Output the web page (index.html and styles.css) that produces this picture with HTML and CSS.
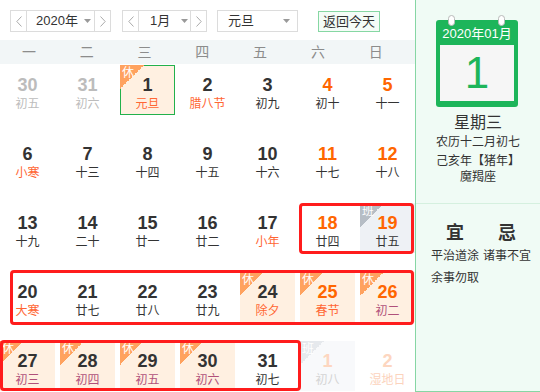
FILE: index.html
```html
<!DOCTYPE html>
<html lang="zh-CN">
<head>
<meta charset="utf-8">
<title>万年历</title>
<link rel="stylesheet" href="styles.css">
</head>
<body>
<div class="wrap">
  <div class="main">
    <div class="toolbar">
      <div class="sel sel-year">
        <span class="arrow arrow-l"><svg width="6" height="11" viewBox="0 0 6 11"><polyline points="5.5,0.5 0.8,5.5 5.5,10.5" fill="none" stroke="#aaa" stroke-width="1"/></svg></span>
        <span class="sel-mid"><span>2020年</span><svg class="caret" width="7" height="4" viewBox="0 0 7 4"><polygon points="0,0 7,0 3.5,4" fill="#999"/></svg></span>
        <span class="arrow arrow-r"><svg width="6" height="11" viewBox="0 0 6 11"><polyline points="0.5,0.5 5.2,5.5 0.5,10.5" fill="none" stroke="#aaa" stroke-width="1"/></svg></span>
      </div>
      <div class="sel sel-month">
        <span class="arrow arrow-l"><svg width="6" height="11" viewBox="0 0 6 11"><polyline points="5.5,0.5 0.8,5.5 5.5,10.5" fill="none" stroke="#aaa" stroke-width="1"/></svg></span>
        <span class="sel-mid"><span>1月</span><svg class="caret" width="7" height="4" viewBox="0 0 7 4"><polygon points="0,0 7,0 3.5,4" fill="#999"/></svg></span>
        <span class="arrow arrow-r"><svg width="6" height="11" viewBox="0 0 6 11"><polyline points="0.5,0.5 5.2,5.5 0.5,10.5" fill="none" stroke="#aaa" stroke-width="1"/></svg></span>
      </div>
      <div class="sel sel-hol">
        <span class="sel-mid"><span>元旦</span><svg class="caret" width="7" height="4" viewBox="0 0 7 4"><polygon points="0,0 7,0 3.5,4" fill="#999"/></svg></span>
      </div>
      <button class="today-btn">返回今天</button>
    </div>
    <div class="weekhead">
      <span>一</span><span>二</span><span>三</span><span>四</span><span>五</span><span>六</span><span>日</span>
    </div>
    <div class="grid">
      <div class="cell other"><div class="num">30</div><div class="lunar">初五</div></div>
      <div class="cell other"><div class="num">31</div><div class="lunar">初六</div></div>
      <div class="cell rest selected"><span class="badge">休</span><div class="num">1</div><div class="lunar fest">元旦</div></div>
      <div class="cell"><div class="num">2</div><div class="lunar fest">腊八节</div></div>
      <div class="cell"><div class="num">3</div><div class="lunar">初九</div></div>
      <div class="cell wkend"><div class="num">4</div><div class="lunar">初十</div></div>
      <div class="cell wkend"><div class="num">5</div><div class="lunar">十一</div></div>

      <div class="cell"><div class="num">6</div><div class="lunar fest">小寒</div></div>
      <div class="cell"><div class="num">7</div><div class="lunar">十三</div></div>
      <div class="cell"><div class="num">8</div><div class="lunar">十四</div></div>
      <div class="cell"><div class="num">9</div><div class="lunar">十五</div></div>
      <div class="cell"><div class="num">10</div><div class="lunar">十六</div></div>
      <div class="cell wkend"><div class="num">11</div><div class="lunar">十七</div></div>
      <div class="cell wkend"><div class="num">12</div><div class="lunar">十八</div></div>

      <div class="cell"><div class="num">13</div><div class="lunar">十九</div></div>
      <div class="cell"><div class="num">14</div><div class="lunar">二十</div></div>
      <div class="cell"><div class="num">15</div><div class="lunar">廿一</div></div>
      <div class="cell"><div class="num">16</div><div class="lunar">廿二</div></div>
      <div class="cell"><div class="num">17</div><div class="lunar fest">小年</div></div>
      <div class="cell wkend"><div class="num">18</div><div class="lunar">廿四</div></div>
      <div class="cell wkend work"><span class="badge">班</span><div class="num">19</div><div class="lunar">廿五</div></div>

      <div class="cell"><div class="num">20</div><div class="lunar fest">大寒</div></div>
      <div class="cell"><div class="num">21</div><div class="lunar">廿七</div></div>
      <div class="cell"><div class="num">22</div><div class="lunar">廿八</div></div>
      <div class="cell"><div class="num">23</div><div class="lunar">廿九</div></div>
      <div class="cell rest"><span class="badge">休</span><div class="num">24</div><div class="lunar fest">除夕</div></div>
      <div class="cell rest wkend"><span class="badge">休</span><div class="num">25</div><div class="lunar fest">春节</div></div>
      <div class="cell rest wkend"><span class="badge">休</span><div class="num">26</div><div class="lunar">初二</div></div>

      <div class="cell rest"><span class="badge">休</span><div class="num">27</div><div class="lunar">初三</div></div>
      <div class="cell rest"><span class="badge">休</span><div class="num">28</div><div class="lunar">初四</div></div>
      <div class="cell rest"><span class="badge">休</span><div class="num">29</div><div class="lunar">初五</div></div>
      <div class="cell rest"><span class="badge">休</span><div class="num">30</div><div class="lunar">初六</div></div>
      <div class="cell"><div class="num">31</div><div class="lunar">初七</div></div>
      <div class="cell next work"><span class="badge">班</span><div class="num">1</div><div class="lunar">初八</div></div>
      <div class="cell next"><div class="num">2</div><div class="lunar fest">湿地日</div></div>
    </div>
    <div class="mark mark-a"></div>
    <div class="mark mark-b"></div>
    <div class="mark mark-c"></div>
  </div>
  <aside class="side">
    <div class="calicon">
      <span class="ring ring-l"></span>
      <span class="ring ring-r"></span>
      <div class="cal-head">2020年01月</div>
      <div class="cal-body">1</div>
    </div>
    <div class="week">星期三</div>
    <div class="info info-1">农历十二月初七</div>
    <div class="info info-2">己亥年【猪年】</div>
    <div class="info info-3">魔羯座</div>
    <div class="yiji">
      <div class="yj-col">
        <div class="yj-title">宜</div>
        <div class="yj-text">平治道涂余事勿取</div>
      </div>
      <div class="yj-col">
        <div class="yj-title">忌</div>
        <div class="yj-text">诸事不宜</div>
      </div>
    </div>
  </aside>
</div>
</body>
</html>
```

FILE: styles.css
```css
* { box-sizing: border-box; }
html, body {
  margin: 0;
  padding: 0;
  background: #fff;
}
body {
  font-family: "Liberation Sans", Arial, "Noto Sans CJK SC", sans-serif;
  color: #333;
  width: 540px;
  height: 392px;
  overflow: hidden;
}
.wrap {
  display: flex;
  width: 540px;
  height: 392px;
}
.main {
  position: relative;
  width: 415px;
  flex: none;
}
.toolbar {
  height: 40px;
  display: flex;
  align-items: flex-start;
  padding: 10px 0 0 10px;
}
.sel {
  display: flex;
  height: 22px;
  border: 1px solid #dcdcdc;
  background: #fff;
  font-size: 13px;
  line-height: 20px;
  color: #333;
}
.sel-year { width: 101px; margin-right: 11px; }
.sel-month { width: 85px; margin-right: 10px; }
.sel-hol { width: 81px; margin-right: 20px; }
.arrow {
  width: 16px;
  flex: none;
  display: flex;
  align-items: center;
  justify-content: center;
}
.arrow-l { border-right: 1px solid #dcdcdc; }
.arrow-r { border-left: 1px solid #dcdcdc; }
.sel-mid {
  flex: 1;
  display: flex;
  align-items: center;
}
.caret { flex: none; }
.sel-year .sel-mid { padding-left: 9px; }
.sel-year .caret { margin-left: 6px; }
.sel-month .sel-mid { padding-left: 11px; }
.sel-month .caret { margin-left: 11px; }
.sel-hol .sel-mid { padding: 0 7px 0 10px; }
.sel-hol .caret { margin-left: auto; }
.today-btn {
  margin-top: 1px;
  height: 21px;
  padding: 0 4px;
  border: 1px solid #86d7a3;
  background: #f4fcf7;
  font-family: inherit;
  font-size: 13px;
  line-height: 19px;
  color: #333;
}
.weekhead {
  height: 24px;
  background: #f2f6f7;
  display: grid;
  grid-template-columns: repeat(7, 57.8px);
  font-size: 14px;
  line-height: 24px;
  color: #8c8c8c;
  text-align: center;
}
.grid {
  display: grid;
  grid-template-columns: repeat(7, 55px);
  grid-auto-rows: 50px;
  column-gap: 5px;
  row-gap: 19px;
  padding-top: 1px;
}
.cell {
  position: relative;
  text-align: center;
  padding-top: 9px;
}
.num {
  font-size: 18px;
  font-weight: bold;
  line-height: 22px;
  color: #333;
}
.lunar {
  font-size: 12px;
  line-height: 16px;
  color: #333;
}
.lunar.fest { color: #ff6633; }
.wkend .num { color: #ff6600; }
.other .num { color: #bcbcbc; }
.other .lunar { color: #bcbcbc; }
.rest { background: #fff0e1; }
.rest .lunar { color: #b0507a; }
.rest .lunar.fest { color: #ff6633; }
.selected { border: 1px solid #22b14c; padding-top: 8px; }
.work { background: #eef1f5; }
.badge {
  position: absolute;
  top: 0;
  left: 0;
  width: 24px;
  height: 24px;
  background: linear-gradient(to bottom right, #ffa25f 50%, transparent 50%);
  color: #fff;
  font-size: 12px;
  line-height: 14px;
  text-align: left;
  padding: 1px 0 0 2px;
}
.selected .badge { top: -1px; left: -1px; }
.work .badge {
  background: linear-gradient(to bottom right, #b6bdc5 50%, transparent 50%);
}
.next { background: transparent; }
.next.work { background: #f8f9fb; }
.next.work .badge {
  background: linear-gradient(to bottom right, #e6e9ed 50%, transparent 50%);
}
.next .num { color: #fdd6c0; }
.next .lunar { color: #d4d4d4; }
.next .lunar.fest { color: #fcd3bd; }

.mark {
  position: absolute;
  border: 3px solid #ff1c1c;
  border-radius: 4px;
  pointer-events: none;
}
.mark-a { left: 299px; top: 203px; width: 115px; height: 51px; }
.mark-b { left: 10px; top: 270px; width: 404px; height: 55px; }
.mark-c { left: 0; top: 340px; width: 301px; height: 51px; }

.side {
  flex: 1;
  height: 392px;
  background: #f0fbf5;
  border-left: 1px solid #86d6a4;
  border-bottom: 1px solid #86d6a4;
  text-align: center;
  padding-top: 20px;
}
.calicon {
  position: relative;
  width: 82px;
  height: 87px;
  margin: 0 auto 0 20px;
  background: #1db55a;
  border-radius: 3px;
  padding: 0 4px;
}
.ring {
  position: absolute;
  top: -5px;
  width: 7px;
  height: 11px;
  background: #fff;
  border: 1px solid #b9b9b9;
  border-radius: 4px;
}
.ring-l { left: 12px; }
.ring-r { left: 62px; }
.cal-head {
  height: 25px;
  color: #fff;
  font-size: 13px;
  line-height: 26px;
  padding-top: 1px;
}
.cal-body {
  height: 56px;
  background: #f6f6f6;
  color: #1db55a;
  font-size: 44px;
  line-height: 56px;
}
.week {
  margin-top: 5px;
  font-size: 16px;
  line-height: 21px;
}
.info { font-size: 12px; }
.info-1 { line-height: 19px; }
.info-2 { line-height: 19px; }
.info-3 { line-height: 13px; }
.yiji {
  margin-top: 19px;
  border-top: 1px solid #d5f0df;
  display: flex;
  gap: 4px;
  padding: 17px 0 0 15px;
  text-align: center;
}
.yj-col { width: 48px; }
.yj-title {
  font-size: 18px;
  font-weight: bold;
  line-height: 24px;
}
.yj-text {
  font-size: 12px;
  line-height: 22px;
  text-align: left;
}
```
